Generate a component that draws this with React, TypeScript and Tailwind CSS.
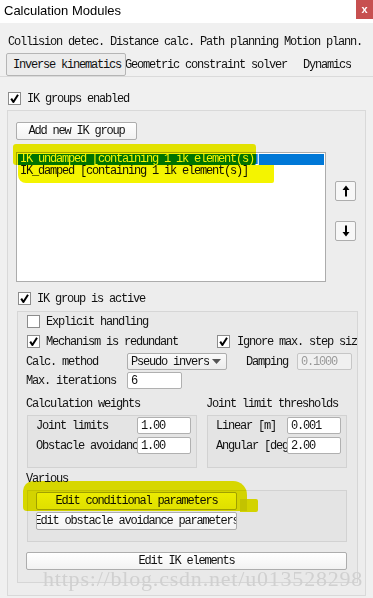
import React from "react";

const mono = "font-['Liberation_Mono',monospace] text-[12px] tracking-[-1.2px] text-[#111]";

function Check({ on }: { on?: boolean }) {
  return (
    <div className="w-[13px] h-[13px] bg-white border border-[#8c8c8c] flex items-center justify-center shrink-0">
      {on && (
        <svg width="11" height="11" viewBox="0 0 11 11">
          <path d="M2.2 5.6 L4.4 9 L9 1.8" fill="none" stroke="#000" strokeWidth="2" strokeLinejoin="round" />
        </svg>
      )}
    </div>
  );
}

function Field({ value, w, disabled }: { value: string; w: string; disabled?: boolean }) {
  return (
    <div
      className={`${w} h-[17px] border rounded-[2px] px-[3px] flex items-center shrink-0 ${
        disabled ? "bg-[#f0f0f0] border-[#c6c6c6]" : "bg-white border-[#b0b0b0]"
      }`}
    >
      <span className={`${mono} ${disabled ? "!text-[#9a9a9a]" : ""}`}>{value}</span>
    </div>
  );
}

function Btn({ label, className }: { label: string; className: string }) {
  return (
    <div
      className={`${className} border border-[#adadad] rounded-[2px] bg-gradient-to-b from-white to-[#f2f2f2] flex items-center justify-center overflow-hidden whitespace-nowrap`}
    >
      <span className={mono}>{label}</span>
    </div>
  );
}

function Arrow({ up }: { up?: boolean }) {
  return (
    <div className="w-[21px] h-[20px] border border-[#adadad] rounded-[2px] bg-[#f7f7f7] flex items-center justify-center">
      <svg width="8" height="12" viewBox="0 0 8 12" className={up ? "" : "rotate-180"}>
        <path d="M4 0.5 L7.5 5 H5 V11.5 H3 V5 H0.5 Z" fill="#000" />
      </svg>
    </div>
  );
}

export default function App() {
  return (
    <div className="relative w-[373px] h-[598px] overflow-hidden bg-[#f0f0f0]">
      {/* TITLE BAR */}
      <div className="h-[23px] bg-white flex items-start justify-between">
        <span className="pl-[4px] pt-[1px] font-['Liberation_Sans',sans-serif] text-[13px] text-black">
          Calculation Modules
        </span>
        <div className="w-[17px] h-[19px] bg-[#c75050] flex items-center justify-center text-white text-[11px] font-bold font-['Liberation_Sans',sans-serif]">
          x
        </div>
      </div>

      {/* TABS */}
      <div className={`${mono} pl-[8px] pt-[10px] h-[29px] whitespace-nowrap`}>
        Collision detec. Distance calc. Path planning Motion plann.
      </div>
      <div className="h-[25px] flex items-start pl-[6px] pt-[1px] whitespace-nowrap border-b border-[#dadada]">
        <div className="w-[120px] h-[23px] border border-[#b5b5b5] rounded-[2px] bg-[#ececec] pl-[6px] flex items-center shrink-0 relative z-10">
          <span className={mono}>Inverse kinematics</span>
        </div>
        <div className="h-[23px] flex items-center overflow-hidden">
          <span className={`${mono} -ml-[1px]`}>Geometric constraint solver</span>
          <span className={`${mono} ml-[16px]`}>Dynamics</span>
        </div>
      </div>

      {/* IK GROUPS ENABLED */}
      <div className="flex items-center gap-[6px] pl-[8px] mt-[15px] h-[13px]">
        <Check on />
        <span className={mono}>IK groups enabled</span>
      </div>

      {/* OUTER GROUP */}
      <div className="ml-[7px] mt-[5px] w-[359px] h-[486px] border border-[#d9d9d9] bg-[#ededed] pl-[8px] pt-[11px]">
        <Btn label="Add new IK group" className="w-[121px] h-[18px]" />

        <div className="flex mt-[12px] gap-[9px]">
          <div className="w-[310px] h-[130px] bg-white border border-[#acacac] pt-[1px] px-[1px]">
            <div className="h-[11px] bg-[#0078d7] flex items-center pl-[2px]">
              <span className={`${mono} !text-white leading-[11px]`}>IK undamped [containing 1 ik element(s)]</span>
            </div>
            <div className="h-[13px] flex items-center pl-[2px]">
              <span className={`${mono} leading-[11px]`}>IK_damped [containing 1 ik element(s)]</span>
            </div>
          </div>
          <div className="flex flex-col gap-[20px] pt-[29px]">
            <Arrow up />
            <Arrow />
          </div>
        </div>

        {/* IK GROUP IS ACTIVE */}
        <div className="flex items-center gap-[6px] pl-[2px] mt-[10px] h-[13px]">
          <Check on />
          <span className={mono}>IK group is active</span>
        </div>

        <div className="ml-[1px] mt-[6px] w-[341px] h-[272px] border border-[#d6d6d6] bg-[#e9e9e9] overflow-hidden pl-[9px] pt-[3px]">
          <div className="flex items-center gap-[6px] h-[13px]">
            <Check />
            <span className={mono}>Explicit handling</span>
          </div>

          <div className="flex items-center h-[13px] mt-[7px] whitespace-nowrap">
            <div className="flex items-center gap-[6px] w-[190px] shrink-0">
              <Check on />
              <span className={mono}>Mechanism is redundant</span>
            </div>
            <div className="flex items-center gap-[7px]">
              <Check on />
              <span className={mono}>Ignore max. step size</span>
            </div>
          </div>

          <div className="flex items-center h-[17px] mt-[5px] -ml-[1px] whitespace-nowrap">
            <span className={`${mono} w-[101px] shrink-0`}>Calc. method</span>
            <div className="w-[100px] h-[17px] border border-[#adadad] rounded-[2px] bg-gradient-to-b from-[#fafafa] to-[#ececec] flex items-center pl-[3px] pr-[5px] shrink-0">
              <span className={`${mono} overflow-hidden w-[78px]`}>Pseudo inverse</span>
              <svg width="9" height="5" viewBox="0 0 9 5" className="ml-auto">
                <path d="M0 0 H9 L4.5 5 Z" fill="#555" />
              </svg>
            </div>
            <span className={`${mono} ml-[19px] w-[51px] shrink-0`}>Damping</span>
            <Field value="0.1000" w="w-[55px]" disabled />
          </div>

          <div className="flex items-center h-[17px] mt-[2px] -ml-[1px] whitespace-nowrap">
            <span className={`${mono} w-[101px] shrink-0`}>Max. iterations</span>
            <Field value="6" w="w-[55px]" />
          </div>

          <div className="flex h-[12px] mt-[9px] -ml-[1px] whitespace-nowrap">
            <span className={`${mono} w-[180px] leading-[12px]`}>Calculation weights</span>
            <span className={`${mono} leading-[12px]`}>Joint limit thresholds</span>
          </div>

          <div className="flex gap-[10px] mt-[5px]">
            <div className="w-[170px] h-[53px] border border-[#d2d2d2] bg-[#e4e4e4] pl-[8px] pt-[1px] whitespace-nowrap">
              <div className="flex items-center h-[17px]">
                <span className={`${mono} w-[101px] overflow-hidden shrink-0`}>Joint limits</span>
                <Field value="1.00" w="w-[54px]" />
              </div>
              <div className="flex items-center h-[17px] mt-[3px]">
                <span className={`${mono} w-[101px] overflow-hidden shrink-0`}>Obstacle avoidance</span>
                <Field value="1.00" w="w-[54px]" />
              </div>
            </div>
            <div className="w-[140px] h-[53px] border border-[#d2d2d2] bg-[#e4e4e4] pl-[8px] pt-[1px] whitespace-nowrap">
              <div className="flex items-center h-[17px]">
                <span className={`${mono} w-[71px] overflow-hidden shrink-0`}>Linear [m]</span>
                <Field value="0.001" w="w-[54px]" />
              </div>
              <div className="flex items-center h-[17px] mt-[3px]">
                <span className={`${mono} w-[71px] overflow-hidden shrink-0`}>Angular [deg]</span>
                <Field value="2.00" w="w-[54px]" />
              </div>
            </div>
          </div>

          <div className={`${mono} -ml-[1px] mt-[5px] h-[12px] leading-[12px]`}>Various</div>

          <div className="mt-[5px] w-[320px] h-[52px] border border-[#d2d2d2] bg-[#e4e4e4] pl-[8px] pt-[1px]">
            <Btn label="Edit conditional parameters" className="w-[201px] h-[18px]" />
            <Btn label="Edit obstacle avoidance parameters" className="w-[201px] h-[18px] mt-[2px]" />
          </div>

          <Btn label="Edit IK elements" className="-ml-[1px] mt-[10px] w-[321px] h-[18px]" />
        </div>
      </div>

      {/* HIGHLIGHTER MARKS */}
      <div className="absolute left-[13px] top-[144px] w-[243px] h-[21px] bg-[#f4f400] mix-blend-multiply rounded-[3px]" />
      <div className="absolute left-[18px] top-[165px] w-[256px] h-[18px] bg-[#f4f400] mix-blend-multiply rounded-br-[2px] rounded-bl-[8px]" />
      <div className="absolute left-[23px] top-[481px] w-[224px] h-[30px] bg-[#ecec00] mix-blend-multiply rounded-tl-[10px] rounded-tr-[14px] rounded-bl-[4px]" />
      <div className="absolute left-[240px] top-[499px] w-[18px] h-[13px] bg-[#ecec00] mix-blend-multiply rounded-r-[2px]" />

      {/* WATERMARK */}
      <div className="absolute left-[43px] top-[568px] font-['Liberation_Serif',serif] text-[22px] leading-[22px] text-[#d0d0d0] tracking-[0.8px] whitespace-nowrap">
        https://blog.csdn.net/u013528298
      </div>
    </div>
  );
}
